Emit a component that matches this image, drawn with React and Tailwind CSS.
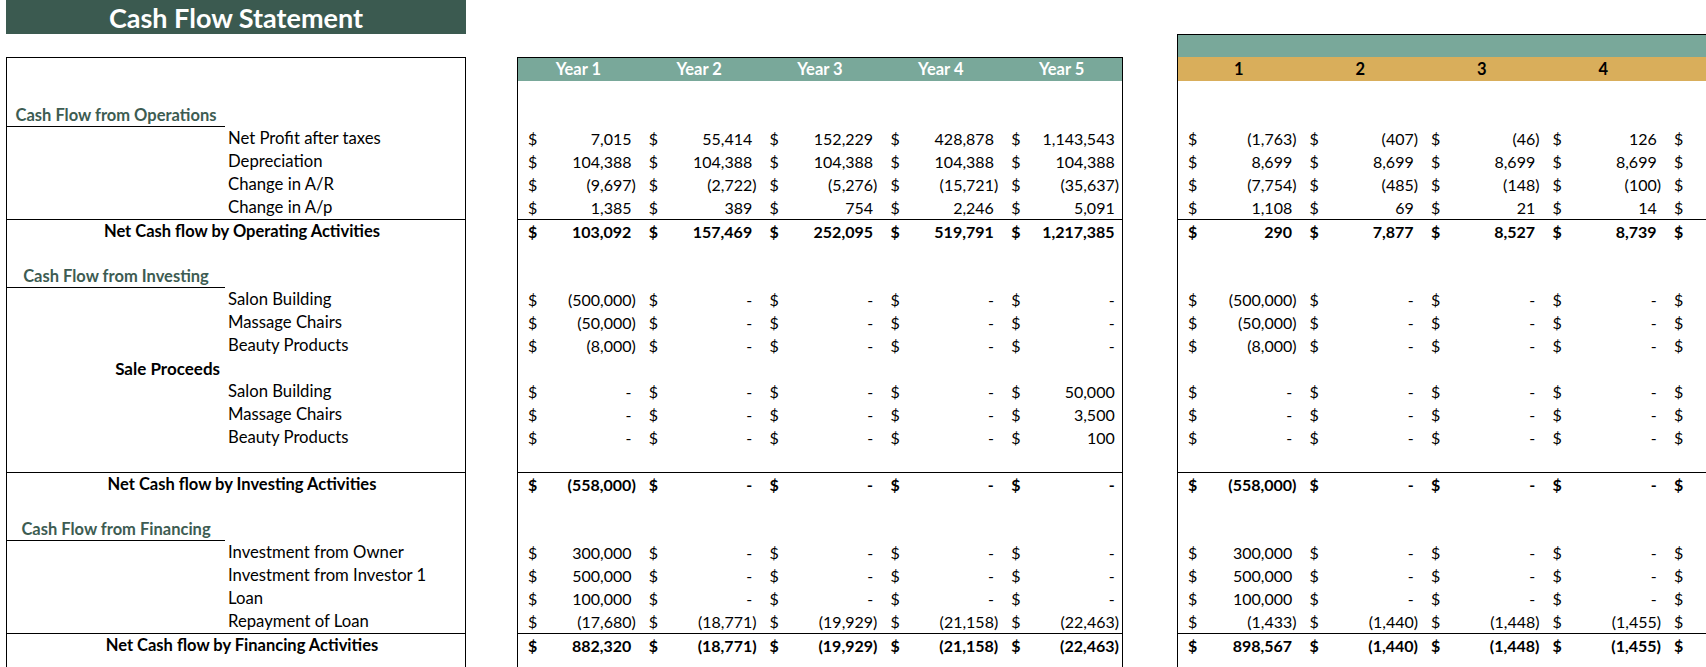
import React from 'react';

const D = '-';

const ROWS = [
  { kind: 'blank' },
  { kind: 'section', label: 'Cash Flow from Operations' },
  { kind: 'item', label: 'Net Profit after taxes', m: ['7,015', '55,414', '152,229', '428,878', '1,143,543'], r: ['(1,763)', '(407)', '(46)', '126'] },
  { kind: 'item', label: 'Depreciation', m: ['104,388', '104,388', '104,388', '104,388', '104,388'], r: ['8,699', '8,699', '8,699', '8,699'] },
  { kind: 'item', label: 'Change in A/R', m: ['(9,697)', '(2,722)', '(5,276)', '(15,721)', '(35,637)'], r: ['(7,754)', '(485)', '(148)', '(100)'] },
  { kind: 'item', label: 'Change in A/p', m: ['1,385', '389', '754', '2,246', '5,091'], r: ['1,108', '69', '21', '14'] },
  { kind: 'total', label: 'Net Cash flow by Operating Activities', m: ['103,092', '157,469', '252,095', '519,791', '1,217,385'], r: ['290', '7,877', '8,527', '8,739'] },
  { kind: 'blank' },
  { kind: 'section', label: 'Cash Flow from Investing' },
  { kind: 'item', label: 'Salon Building', m: ['(500,000)', D, D, D, D], r: ['(500,000)', D, D, D] },
  { kind: 'item', label: 'Massage Chairs', m: ['(50,000)', D, D, D, D], r: ['(50,000)', D, D, D] },
  { kind: 'item', label: 'Beauty Products', m: ['(8,000)', D, D, D, D], r: ['(8,000)', D, D, D] },
  { kind: 'sub', label: 'Sale Proceeds' },
  { kind: 'item', label: 'Salon Building', m: [D, D, D, D, '50,000'], r: [D, D, D, D] },
  { kind: 'item', label: 'Massage Chairs', m: [D, D, D, D, '3,500'], r: [D, D, D, D] },
  { kind: 'item', label: 'Beauty Products', m: [D, D, D, D, '100'], r: [D, D, D, D] },
  { kind: 'blank' },
  { kind: 'total', label: 'Net Cash flow by Investing Activities', m: ['(558,000)', D, D, D, D], r: ['(558,000)', D, D, D] },
  { kind: 'blank' },
  { kind: 'section', label: 'Cash Flow from Financing' },
  { kind: 'item', label: 'Investment from Owner', m: ['300,000', D, D, D, D], r: ['300,000', D, D, D] },
  { kind: 'item', label: 'Investment from Investor 1', m: ['500,000', D, D, D, D], r: ['500,000', D, D, D] },
  { kind: 'item', label: 'Loan', m: ['100,000', D, D, D, D], r: ['100,000', D, D, D] },
  { kind: 'item', label: 'Repayment of Loan', m: ['(17,680)', '(18,771)', '(19,929)', '(21,158)', '(22,463)'], r: ['(1,433)', '(1,440)', '(1,448)', '(1,455)'] },
  { kind: 'total', label: 'Net Cash flow by Financing Activities', m: ['882,320', '(18,771)', '(19,929)', '(21,158)', '(22,463)'], r: ['898,567', '(1,440)', '(1,448)', '(1,455)'] },
  { kind: 'blank' },
];

// accounting style cell: $ on the left, number on the right, room kept for ")"
const Amount = ({ v, bold }) => (
  <div className={`flex justify-between pl-[10px] pr-[3px] text-[16px] ${bold ? 'font-bold' : ''}`}>
    <span>$</span>
    <span>
      {v}
      {!v.endsWith(')') && <span className="invisible">)</span>}
    </span>
  </div>
);

const LabelRow = ({ row }) => {
  if (row.kind === 'section') {
    return (
      <div className="h-[23px] w-[218px] border-b border-black text-center text-[16.5px] font-bold text-[#3d5c52]">
        {row.label}
      </div>
    );
  }
  if (row.kind === 'sub') {
    return <div className="h-[23px] w-[218px] pr-[5px] text-right text-[17px] font-bold">{row.label}</div>;
  }
  if (row.kind === 'item') {
    return <div className="h-[23px] pl-[221px] text-[16.7px]">{row.label}</div>;
  }
  if (row.kind === 'total') {
    return (
      <div className="h-[23px] border-t border-black pl-[12px] text-center text-[16.5px] font-bold">{row.label}</div>
    );
  }
  return <div className="h-[23px]" />;
};

const App = () => {
  return (
    <div className="flex h-[667px] w-[1706px] items-start overflow-hidden bg-white font-['Lato',sans-serif] text-[15px] leading-[23px] text-black">
      {/* labels */}
      <div className="ml-[6px] w-[460px] shrink-0">
        <div className="flex h-[34px] items-center justify-center bg-[#3b5a50] text-[27px] font-bold text-white">
          Cash Flow Statement
        </div>
        <div className="mt-[23px] border-x border-t border-black">
          <div className="h-[23px]" />
          {ROWS.map((row, i) => (
            <LabelRow key={i} row={row} />
          ))}
        </div>
      </div>

      {/* yearly */}
      <div className="ml-[51px] mt-[57px] w-[606px] shrink-0 border-x border-t border-black">
        <div className="grid h-[23px] grid-cols-5 bg-[#79a89a] text-[16.5px] font-bold text-white">
          {['Year 1', 'Year 2', 'Year 3', 'Year 4', 'Year 5'].map((y) => (
            <div key={y} className="text-center">{y}</div>
          ))}
        </div>
        <div className="grid grid-cols-5">
          {ROWS.map((row, ri) => {
            const isTotal = row.kind === 'total';
            return [0, 1, 2, 3, 4].map((i) => (
              <div key={`${ri}-${i}`} className={`h-[23px] ${isTotal ? 'border-t border-black' : ''}`}>
                {row.m && <Amount v={row.m[i]} bold={isTotal} />}
              </div>
            ));
          })}
        </div>
      </div>

      {/* monthly */}
      <div className="ml-[54px] mt-[34px] min-w-0 flex-1 overflow-hidden border-l border-t border-black">
        <div className="h-[22px] bg-[#79a89a]" />
        <div className="grid h-[24px] grid-cols-[repeat(5,121.5px)] bg-[#d9ae5b] text-[16.5px] font-bold leading-[24px]">
          {['1', '2', '3', '4', ''].map((n, i) => (
            <div key={i} className="text-center">{n}</div>
          ))}
        </div>
        <div className="grid grid-cols-[repeat(5,121.5px)]">
          {ROWS.map((row, ri) => {
            const isTotal = row.kind === 'total';
            return [0, 1, 2, 3, 4].map((i) => (
              <div key={`${ri}-${i}`} className={`h-[23px] ${isTotal ? 'border-t border-black' : ''}`}>
                {row.r &&
                  (i < 4 ? (
                    <Amount v={row.r[i]} bold={isTotal} />
                  ) : (
                    <div className={`pl-[10px] text-[16px] ${isTotal ? 'font-bold' : ''}`}>$</div>
                  ))}
              </div>
            ));
          })}
        </div>
      </div>
    </div>
  );
};

export default App;
